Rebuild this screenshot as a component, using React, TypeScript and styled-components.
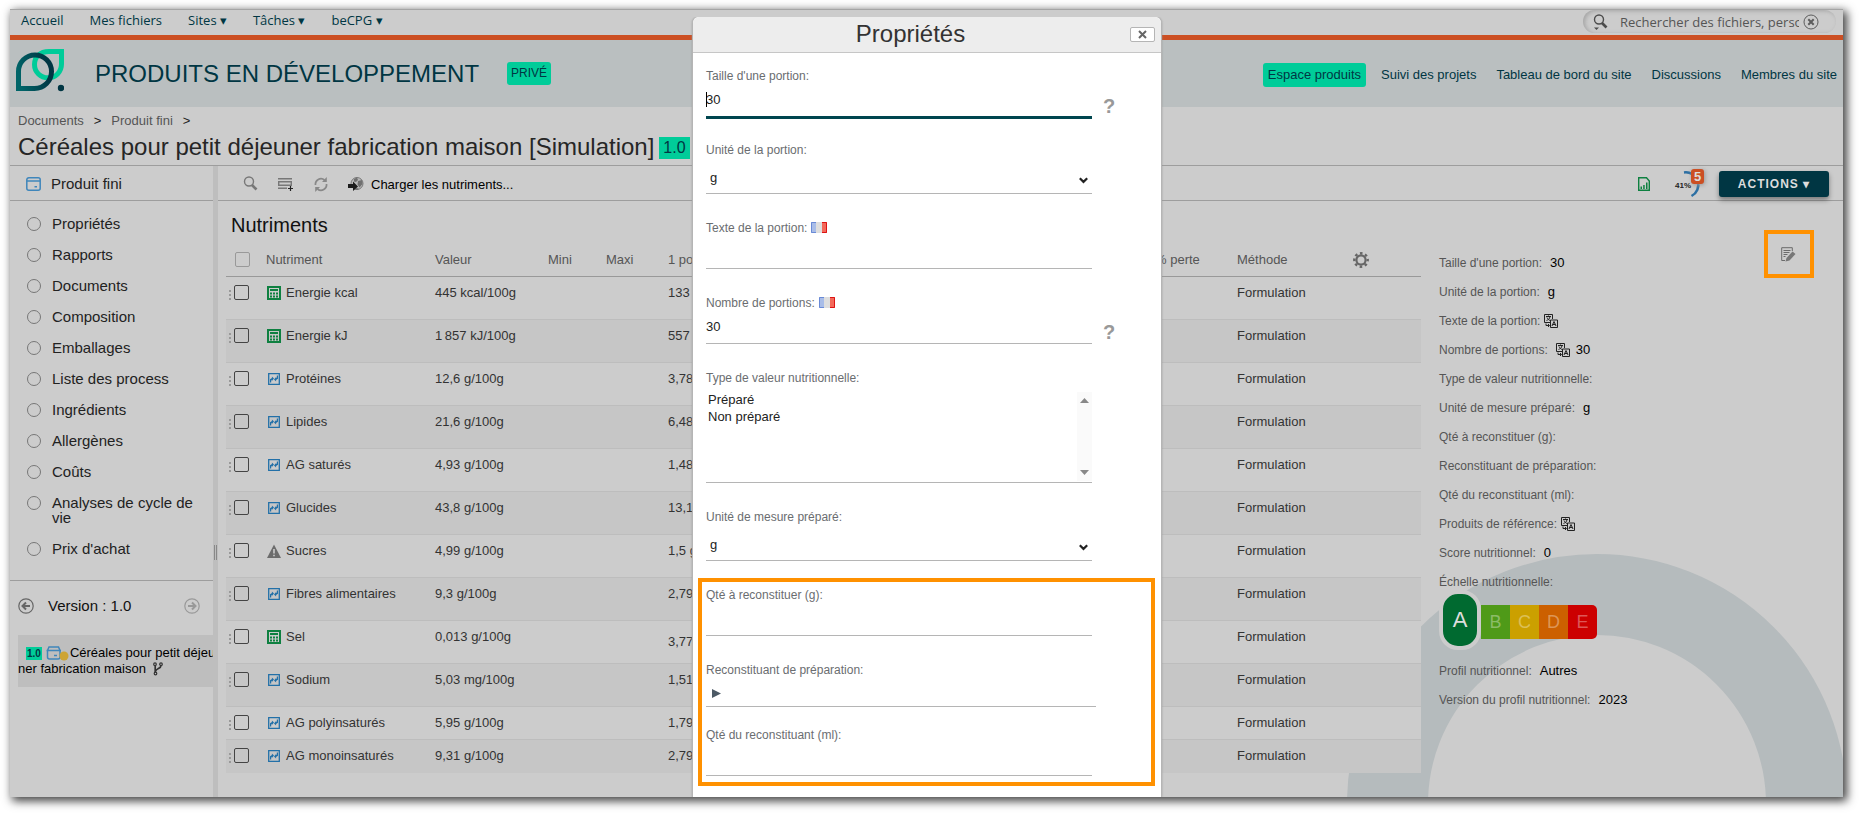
import React from 'react';
import styled, { createGlobalStyle } from 'styled-components';

const GlobalStyle = createGlobalStyle`
  *, *::before, *::after { box-sizing: border-box; }
  body {
    margin: 0;
    background: #fff;
    color: #222;
    font: 13px/16px "Liberation Sans", Arial, sans-serif;
  }
  button, input, select { font: inherit; color: inherit; }
  button { cursor: pointer; }
  a { color: inherit; text-decoration: none; }
  svg { display: block; flex: none; }
`;

/* ---------- frame ---------- */

const Frame = styled.div`
  position: relative;
  display: flex;
  flex-direction: column;
  min-height: calc(100vh - 25px);
  margin: 9px 16px 16px 10px;
  overflow: hidden;
  background: #ccc;
`;

const Shadow = styled.div`
  display: flow-root;
  &::before {
    content: "";
    position: absolute;
    inset: 9px 16px 16px 10px;
    box-shadow: 3px 3px 9px 1px rgba(0, 0, 0, 0.75);
  }
`;

/* ---------- top bar ---------- */

const TopBar = styled.header`
  display: flex;
  justify-content: space-between;
  height: 31px;
  padding: 0 7px 0 11px;
  border-top: 1px solid #a5a5a5;
  border-bottom: 5px solid #cc4f23;
`;

const TopMenu = styled.nav`
  display: flex;
  gap: 26px;
  color: #003643;
  font: 13px/20px "Open Sans", sans-serif;
`;

const SearchBox = styled.div`
  display: flex;
  align-items: center;
  width: 253px;
  height: 23px;
  padding: 0 17px 0 10px;
  border-radius: 12px;
  box-shadow: inset 2px 1px 4px #a4a4a4;
`;

const SearchInput = styled.input`
  flex: 1;
  min-width: 0;
  margin: 0 4px 0 12px;
  padding: 0;
  border: 0;
  outline: 0;
  background: none;
  font: 13px/20px "Open Sans", sans-serif;
  &::placeholder { color: #555; opacity: 1; }
`;

const BareButton = styled.button`
  display: flex;
  align-items: center;
  padding: 0;
  border: 0;
  background: none;
`;

/* ---------- site header ---------- */

const SiteHeader = styled.div`
  display: flex;
  align-items: center;
  height: 67px;
  padding: 0 6px;
  background: #babfc0;
  color: #003643;
`;

const LogoLink = styled.a`
  align-self: flex-start;
  padding-top: 9px;
`;

const SiteTitle = styled.h1`
  margin: 0 28px 0 31px;
  font-size: 24px;
  line-height: 32px;
  font-weight: 400;
  white-space: nowrap;
`;

const Tag = styled.span`
  padding: 4px;
  border-radius: 3px;
  background: #00cc99;
  font-size: 12px;
  line-height: 15px;
`;

const SiteNav = styled.nav`
  display: flex;
  align-items: center;
  gap: 20px;
  margin-left: auto;
  padding-top: 3px;
  white-space: nowrap;
`;

const SiteLink = styled.a<{ $active?: boolean }>`
  line-height: 24px;
  ${p => p.$active && `
    margin-right: -5px;
    padding: 0 5px;
    border-radius: 3px;
    background: #00cc99;
  `}
`;

/* ---------- document header ---------- */

const DocHeader = styled.div`
  padding: 6px 8px 3px;
  border-bottom: 1px solid #9d9d9d;
`;

const Crumbs = styled.nav`
  display: flex;
  gap: 10px;
  color: #555;
  i { color: #222; font-style: normal; }
`;

const DocTitle = styled.h2`
  display: flex;
  align-items: center;
  margin: 0;
  gap: 5px;
  padding-top: 3px;
  color: #262626;
  font-size: 24px;
  line-height: 30px;
  font-weight: 400;
  white-space: nowrap;
`;

const DocVersion = styled.span`
  margin-top: 2px;
  padding: 0 4px;
  background: #00cc99;
  color: #003643;
  font-size: 16px;
  line-height: 22px;
`;

/* ---------- body ---------- */

const Columns = styled.div`
  display: flex;
  flex: 1;
`;

const Sidebar = styled.aside`
  flex: none;
  width: 203px;
  overflow: hidden;
`;

const Splitter = styled.div`
  display: flex;
  justify-content: center;
  flex: none;
  width: 5px;
  background: #bebebe;
  &::before {
    content: "";
    width: 3px;
    height: 15px;
    margin-top: 379px;
    border: solid #888;
    border-width: 0 1px;
  }
`;

const SideHead = styled.div`
  display: flex;
  align-items: center;
  gap: 10px;
  height: 35px;
  padding: 1px 0 0 16px;
  border-bottom: 1px solid #9d9d9d;
  color: #222;
  font-size: 15px;
`;

const SideList = styled.ul`
  margin: 0;
  padding: 7px 12px 16px 17px;
  border-bottom: 1px solid #9d9d9d;
  list-style: none;
`;

const SideItem = styled.li`
  display: flex;
  gap: 11px;
  padding: 8px 0;
  color: #222;
  font-size: 15px;
  line-height: 15px;
  &::before {
    content: "";
    flex: none;
    width: 14px;
    height: 14px;
    margin-top: 1px;
    border: 1px solid #777;
    border-radius: 50%;
  }
`;

const VersionRow = styled.div`
  display: flex;
  align-items: center;
  padding: 17px 13px 21px 8px;
  color: #111;
  font-size: 15px;
  span { flex: 1; margin-left: 14px; }
`;

const Tree = styled.div`
  margin-left: 8px;
  padding: 10px 0;
  background: #bebebe;
  color: #000;
`;

const TreeLine = styled.div<{ $indent?: number }>`
  display: flex;
  align-items: center;
  padding-left: ${p => p.$indent || 0}px;
  white-space: nowrap;
`;

const MiniVersion = styled.span`
  margin-right: 4px;
  padding: 0 1px;
  background: #00cc99;
  color: #003643;
  font-size: 10px;
  line-height: 13px;
  font-weight: 700;
`;

/* ---------- main ---------- */

const Main = styled.main`
  position: relative;
  flex: 1;
  min-width: 0;
  overflow: hidden;
`;

const Ring = styled.div`
  position: absolute;
  right: -4px;
  bottom: -257px;
  width: 500px;
  height: 500px;
  border: 81px solid #b5bbbd;
  border-radius: 50%;
`;

const Toolbar = styled.div`
  position: relative;
  display: flex;
  align-items: center;
  height: 35px;
  padding: 2px 14px 0 25px;
  border-bottom: 1px solid #9d9d9d;
`;

const ToolIcons = styled.div`
  display: flex;
  align-items: center;
  flex: 1;
  gap: 20px;
`;

const LoadButton = styled(BareButton)`
  gap: 7px;
  color: #000;
  span { padding-top: 1px; }
`;

const GaugeBox = styled.div`
  position: relative;
  width: 30px;
  height: 30px;
  margin: 0 15px 0 23px;
`;

const Badge = styled.span`
  position: absolute;
  top: 0;
  right: 0;
  width: 13px;
  border-radius: 3px;
  background: #cc4f23;
  box-shadow: 1px 1px 4px #999;
  color: #ddd;
  font-size: 13px;
  line-height: 15px;
  font-weight: 700;
  text-align: center;
`;

const Actions = styled.button`
  height: 26px;
  padding: 0;
  width: 110px;
  border: 0;
  border-radius: 3px;
  background: #003643;
  box-shadow: 0 3px 5px rgba(0, 0, 0, 0.4);
  color: #ddd;
  font-size: 12px;
  font-weight: 700;
  letter-spacing: 1px;
`;

const Split = styled.div`
  position: relative;
  display: flex;
`;

const ListPane = styled.section`
  flex: 1;
  min-width: 0;
  padding-left: 8px;
`;

const ListTitle = styled.h3`
  margin: 0;
  padding: 12px 5px 7px;
  color: #111;
  font-size: 20px;
  line-height: 24px;
  font-weight: 400;
`;

const Table = styled.table`
  width: 100%;
  border-collapse: separate;
  border-spacing: 0;
  table-layout: fixed;
  th, td {
    padding: 0;
    text-align: left;
    font-weight: 400;
    white-space: nowrap;
    vertical-align: top;
  }
  th {
    height: 33px;
    padding-top: 8px;
    border-bottom: 1px solid #999;
    color: #555;
  }
`;

const Row = styled.tr<{ $short?: boolean }>`
  background: #ccc;
  color: #333;
  &:nth-child(even) { background: #c6c6c6; }
  td {
    height: ${p => (p.$short ? 33 : 43)}px;
    padding-top: 8px;
    border-bottom: 1px solid #bdbdbd;
  }
  &:last-child td { border-bottom-color: transparent; }
`;

const Pick = styled.span`
  display: flex;
  gap: 3px;
  padding-left: 3px;
`;

const Check = styled.input<{ $soft?: boolean }>`
  appearance: none;
  width: 15px;
  height: 15px;
  margin: ${p => (p.$soft ? '0 0 0 9px' : '0')};
  border: 1px solid ${p => (p.$soft ? '#999' : '#444')};
  border-radius: 2px;
`;

const NutrientName = styled.span`
  display: flex;
  align-items: center;
  gap: 5px;
  padding-left: 1px;
`;

/* ---------- detail pane ---------- */

const Detail = styled.section`
  display: flex;
  justify-content: space-between;
  flex: none;
  width: 422px;
  padding: 29px 29px 0 18px;
`;

const Facts = styled.dl`
  margin: 0;
  padding-top: 18px;
`;

const Fact = styled.div`
  display: flex;
  align-items: center;
  height: 29px;
  color: #555;
  font-size: 12px;
  dt { padding-top: 1px; }
  dd {
    display: flex;
    align-items: center;
    gap: 6px;
    margin: 0 0 0 8px;
    color: #000;
    font-size: 13px;
  }
`;

const IconFact = styled(Fact)`
  dd { margin-left: 4px; }
`;

const Score = styled.dd`
  display: flex;
  align-items: center;
  height: 60px;
  margin: -6px 0 6px;
`;

const Grade = styled.span<{ $bg: string; $big?: boolean; $last?: boolean }>`
  background: ${p => p.$bg};
  text-align: center;
  ${p => p.$big
    ? `width: 42px; border: 4px solid #ccc; border-radius: 19px;
       color: #ddd; font-size: 22px; line-height: 52px;`
    : `width: 29px; margin-top: 3px; color: rgba(255, 255, 255, 0.35);
       font-size: 18px; line-height: 34px;`}
  ${p => p.$last && 'border-radius: 0 5px 5px 0;'}
`;

const EditMark = styled(BareButton)`
  justify-content: center;
  width: 50px;
  height: 48px;
  padding-right: 2px;
  border: 4px solid #ff9100;
`;

/* ---------- dialog ---------- */

const DialogLayer = styled.div`
  position: absolute;
  inset: 8px 0 0 1px;
  display: flex;
  justify-content: center;
  overflow: hidden;
`;

const Dialog = styled.section`
  width: 470px;
  border: solid #b5b5b5;
  border-width: 0 1px;
  border-radius: 6px 6px 0 0;
  background: #fff;
  box-shadow: 0 0 2px #999;
  color: #222;
`;

const DialogHead = styled.div`
  display: flex;
  align-items: center;
  height: 36px;
  padding: 0 6px 0 0;
  border-bottom: 1px solid #c6c6c6;
  border-radius: 6px 6px 0 0;
  background: #ededed;
  h2 {
    flex: 1;
    margin: 0;
    padding: 0 2px 2px 0;
    font-size: 24px;
    line-height: 30px;
    font-weight: 400;
    text-align: center;
    color: #333;
  }
`;

const CloseButton = styled.button`
  display: flex;
  align-items: center;
  justify-content: center;
  width: 25px;
  height: 15px;
  padding: 0;
  border: 1px solid #b5b5b5;
  border-radius: 2px;
  background: #fff;
`;

const Form = styled.form`
  display: flex;
  flex-direction: column;
  gap: 26px;
  padding: 15px 6px 12px 13px;
`;

const Field = styled.div`
  position: relative;
`;

const Label = styled.label`
  display: flex;
  align-items: center;
  gap: 4px;
  color: #6a6d70;
  font-size: 12px;
  line-height: 16px;
  svg { margin-bottom: 2px; }
`;

const Line = styled.div<{ $focus?: boolean }>`
  position: relative;
  display: flex;
  align-items: center;
  gap: 11px;
  margin-bottom: ${p => (p.$focus ? -3 : 0)}px;
`;

const TextInput = styled.input<{ $focus?: boolean }>`
  width: 386px;
  height: ${p => (p.$focus ? 35 : 33)}px;
  padding: 0 0 2px;
  border: 0;
  border-bottom: ${p => (p.$focus ? '3px solid #00464f' : '1px solid #b5b5b5')};
  border-radius: 0;
  outline: 0;
  background: none;
`;

const Caret = styled.span`
  position: absolute;
  top: 8px;
  left: 0;
  width: 1px;
  height: 15px;
  background: #000;
`;

const Help = styled.button`
  padding: 9px 0 0;
  border: 0;
  background: none;
  color: #999;
  font-size: 20px;
  line-height: 20px;
  font-weight: 700;
`;

const Select = styled.select`
  appearance: none;
  width: 386px;
  height: 36px;
  padding: 5px 4px 0;
  border: 0;
  border-bottom: 1px solid #b5b5b5;
  border-radius: 0;
  background: none;
`;

const Chevron = styled.svg`
  position: absolute;
  left: 373px;
  top: 19px;
  pointer-events: none;
`;

const MultiSelect = styled.select`
  appearance: none;
  display: block;
  width: 386px;
  height: 97px;
  padding: 6px 0 0;
  border: 0;
  border-bottom: 1px solid #b5b5b5;
  border-radius: 0;
  outline: 0;
  background: none;
  overflow: hidden;
  option { min-height: 17px; padding: 0 2px; line-height: 17px; }
`;

const Scrollbar = styled.div`
  position: absolute;
  top: 22px;
  left: 371px;
  display: flex;
  flex-direction: column;
  align-items: center;
  justify-content: space-between;
  width: 15px;
  height: 89px;
  padding: 6px 0;
  background: #fafafa;
`;

const PickerLine = styled.div`
  display: flex;
  align-items: center;
  width: 390px;
  height: 29px;
  padding: 2px 0 0 6px;
  border-bottom: 1px solid #b5b5b5;
`;

const Highlight = styled.div`
  display: flex;
  flex-direction: column;
  margin: -9px 0 0 -8px;
  padding: 5px 4px 6px;
  border: 4px solid #ff9100;
  ${Field} + ${Field} { margin-top: 26px; }
  ${Field}:last-child { margin-top: 20px; }
`;

/* ---------- icons ---------- */

const Logo = () => (
  <svg width="48" height="43" viewBox="0 0 48 43" fill="none">
    <defs>
      <linearGradient id="leaf" x1="0" y1="0.6" x2="0.9" y2="0.4">
        <stop offset="0" stopColor="#006468" />
        <stop offset="1" stopColor="#003643" />
      </linearGradient>
    </defs>
    <path d="M45.500 2.500V15C45.500 23 39.500 28.800 32 28.800S18.500 23 18.500 15.500 24 2.500 33 2.500z" stroke="#00cc99" strokeWidth="5" />
    <path d="M2.500 39.500V22.500A16.500 16.500 0 0 1 35.500 22.500C35.500 32 28 39.500 18.500 39.500z" stroke="url(#leaf)" strokeWidth="5" />
    <circle cx="45" cy="39" r="3.200" fill="#003643" />
  </svg>
);

const Magnifier = ({ color = '#777', arrow = false }) => (
  <svg width="15" height="16" viewBox="0 0 15 16" fill="none" stroke={color}>
    <circle cx="6" cy="5.500" r="4.500" strokeWidth="1.400" />
    <path d="M9 9l4.500 4.500" strokeWidth="2.600" />
    {arrow && <path d="M1 13.500h5l-2.500 2.500z" fill={color} stroke="none" />}
  </svg>
);

const ClearIcon = () => (
  <svg width="16" height="16" viewBox="0 0 16 16" fill="none" stroke="#5c5c5c">
    <circle cx="8" cy="8" r="7" strokeWidth="1" />
    <path d="M5.300 5.300l5.400 5.400M10.700 5.300l-5.400 5.400" strokeWidth="2" />
  </svg>
);

const BoxIcon = () => (
  <svg width="15" height="14" viewBox="0 0 15 14" fill="none" stroke="#3f86bb" strokeWidth="1.500">
    <path d="M.800 4.500V2.800a2 2 0 0 1 2-2h9.400a2 2 0 0 1 2 2V11.200a2 2 0 0 1-2 2H2.800a2 2 0 0 1-2-2zM.800 4h13.400M8.500 9.700H11" />
  </svg>
);

const AddRowIcon = () => (
  <svg width="16" height="16" viewBox="0 0 16 16" fill="none">
    <path d="M0 2.700h14M.700 5.700h12.600v3.600H.700zM0 12.300h9" stroke="#777" strokeWidth="1.400" />
    <path d="M12.500 10v5M10 12.500h5" stroke="#222" strokeWidth="1.200" />
  </svg>
);

const RefreshIcon = () => (
  <svg width="14" height="15" viewBox="0 0 14 15" fill="none" stroke="#888" strokeWidth="1.700">
    <path d="M1.500 8A5.500 5.500 0 0 1 10.500 3M12.500 7A5.500 5.500 0 0 1 3.500 12" />
    <path d="M12.800 0v5H8zM1.200 15v-5H6z" fill="#888" stroke="none" />
  </svg>
);

const ImportIcon = () => (
  <svg width="16" height="16" viewBox="0 0 16 16" fill="none">
    <circle cx="9" cy="7.500" r="6" fill="#b8b8b8" stroke="#777" strokeWidth="1" />
    <path d="M6 3l3-1.500 1 2.500-2 2-2-.500zM10 5l4-1 .500 4-3 3.500-2-3zM6 13l3-1 2 1-2 1z" fill="#707070" />
    <path d="M0 8h5V5.500l5 5L5 15v-3H0z" fill="#1c1c1c" />
  </svg>
);

const ReportIcon = () => (
  <svg width="13" height="14" viewBox="0 0 13 14" fill="none">
    <path d="M.700.700H8.500L11.300 4v9.300H.700z" stroke="#0e8040" strokeWidth="1.400" />
    <path d="M2.500 9.500H4V12H2.500zM5.200 8h1.500v4H5.200zM8 5.500h1.500V12H8z" fill="#0e8040" />
  </svg>
);

const Gauge = () => (
  <svg width="30" height="30" viewBox="0 0 30 30" fill="none">
    <path d="M10 3.500A12.500 12.500 0 0 1 17.500 27" stroke="#2c6fa3" strokeWidth="2.500" />
    <text x="1" y="19" fontSize="8" fontWeight="700" fill="#222" fontFamily="Liberation Sans">41%</text>
  </svg>
);

const BackIcon = ({ color, flip = false }: { color: string; flip?: boolean }) => (
  <svg width="16" height="16" viewBox="0 0 16 16" fill="none" stroke={color}>
    <circle cx="8" cy="8" r="7.200" strokeWidth="1.200" />
    <path d={flip ? 'M4 8h7M8 4.500L11.500 8 8 11.500' : 'M12 8H5M8 4.500L4.500 8 8 11.500'} strokeWidth="2" />
  </svg>
);

const BranchIcon = () => (
  <svg width="10" height="14" viewBox="0 0 10 14" fill="none" stroke="#333" strokeWidth="1.200">
    <circle cx="2" cy="2.200" r="1.300" />
    <circle cx="8" cy="2.200" r="1.300" />
    <circle cx="2.500" cy="11.500" r="1.300" />
    <path d="M2.200 3.500v6.700M8 3.500C8 7 3 6 2.500 9.500" strokeWidth="1.700" />
  </svg>
);

const GearIcon = () => (
  <svg width="16" height="16" viewBox="0 0 16 16" fill="none" stroke="#666">
    <circle cx="8" cy="8" r="4.600" strokeWidth="2.200" />
    <circle cx="8" cy="8" r="6.700" strokeWidth="2.400" strokeDasharray="2.600 2.662" strokeDashoffset="1.300" />
  </svg>
);

const CalcIcon = () => (
  <svg width="14" height="14" viewBox="0 0 14 14" fill="none">
    <path d="M1 1h12v12H1z" stroke="#0e8040" strokeWidth="2" />
    <path d="M3 4h8" stroke="#0e8040" strokeWidth="2" />
    <path d="M3 7.500h8M3 10.500h8" stroke="#0e8040" strokeWidth="2" strokeDasharray="2 1" />
  </svg>
);

const SheetIcon = () => (
  <svg width="14" height="14" viewBox="0 0 14 14" fill="#2270a8">
    <path d="M1.700 1.700h10.600v10.600H1.700z" fill="none" stroke="#2270a8" strokeWidth="1.300" />
    <path d="M3 10.500V7.200L4.900 6V4.600L7 6.400 4.900 9V7.900L4.200 8.400v2.100z" />
    <path d="M3 10.500V7.200L4.900 6V4.600L7 6.400 4.900 9V7.900L4.200 8.400v2.100z" transform="rotate(180 7 7)" />
  </svg>
);

const WarnIcon = () => (
  <svg width="14" height="14" viewBox="0 0 14 14">
    <path d="M7 .500L14 14H0z" fill="#6c6c6c" />
    <path d="M6.200 5h1.600v4.500H6.200zM6.200 10.700h1.600v1.600H6.200z" fill="#ccc" />
  </svg>
);

const DragDots = () => (
  <svg width="2" height="15" viewBox="0 0 2 15" fill="#999">
    <path d="M0 5h2v2H0zM0 9h2v2H0zM0 13h2v2H0z" />
  </svg>
);

const TranslateIcon = () => (
  <svg width="14" height="14" viewBox="0 0 14 14" fill="none" stroke="#222">
    <path d="M6 8.500H.500v-8h8V5" />
    <path d="M2 2.500h5M4.500 1.500v1M6 2.500C6 5 3.500 6 2.500 6.500M3 3.500c.500 1.500 2 2.500 3 3M2 9.500v2h3M4 10l1.500 1.500L4 13" />
    <path d="M6.500 6h7v7.500h-7z" />
    <path d="M8 12l2-4.500L12 12M8.700 10.500h2.600" />
  </svg>
);

const EditIcon = () => (
  <svg width="15" height="15" viewBox="0 0 15 15" fill="none" stroke="#6b6b6b">
    <path d="M4 13.500H.700V.700h10.600V4M2.500 3.500h7M2.500 5.500h6M2.500 7.500h4M2.500 9.500h2" />
    <path d="M4.500 14.500l1-3.500 6-6.500 3 2.500-6 6.500z" fill="#777" stroke="none" />
  </svg>
);

const CloseIcon = () => (
  <svg width="9" height="9" viewBox="0 0 9 9" stroke="#666" strokeWidth="2">
    <path d="M1 1l7 7M8 1L1 8" />
  </svg>
);

const Flag = () => (
  <svg width="16" height="11" viewBox="0 0 16 11">
    <path d="M0 0h5v11H0z" fill="#a9bde8" />
    <path d="M5 0h6v11H5z" fill="#dedede" />
    <path d="M11 0h5v11h-5z" fill="#f3695a" />
    <path d="M5 .500H.500v10H5" fill="none" stroke="#6a8ad6" />
    <path d="M11 .500h4.500v10H11" fill="none" stroke="#dc1414" />
  </svg>
);

const Triangle = ({ d }: { d: string }) => (
  <svg width="9" height="5" viewBox="0 0 9 5"><path d={d} fill="#888" /></svg>
);

const SelectArrow = () => (
  <Chevron width="9" height="7" viewBox="0 0 9 7" fill="none" stroke="#222" strokeWidth="2.200">
    <path d="M.800 1.200l3.700 3.700 3.700-3.700" />
  </Chevron>
);

/* ---------- data ---------- */

const sections = [
  'Propriétés', 'Rapports', 'Documents', 'Composition', 'Emballages', 'Liste des process',
  'Ingrédients', 'Allergènes', 'Coûts', 'Analyses de cycle de vie', "Prix d'achat",
];

type Nutrient = { icon: React.ReactNode; name: string; value: string; portion: React.ReactNode };

const calc = <CalcIcon />;
const sheet = <SheetIcon />;

const nutrients: Nutrient[] = [
  { icon: calc, name: 'Energie kcal', value: '445 kcal/100g', portion: '133 kcal' },
  { icon: calc, name: 'Energie kJ', value: '1\u202f857 kJ/100g', portion: '557 kJ' },
  { icon: sheet, name: 'Protéines', value: '12,6 g/100g', portion: '3,78 g' },
  { icon: sheet, name: 'Lipides', value: '21,6 g/100g', portion: '6,48 g' },
  { icon: sheet, name: 'AG saturés', value: '4,93 g/100g', portion: '1,48 g' },
  { icon: sheet, name: 'Glucides', value: '43,8 g/100g', portion: '13,1 g' },
  { icon: <WarnIcon />, name: 'Sucres', value: '4,99 g/100g', portion: '1,5 g' },
  { icon: sheet, name: 'Fibres alimentaires', value: '9,3 g/100g', portion: '2,79 g' },
  { icon: calc, name: 'Sel', value: '0,013 g/100g', portion: <>3,77×10<sup>-3</sup> g</> },
  { icon: sheet, name: 'Sodium', value: '5,03 mg/100g', portion: '1,51 mg' },
  { icon: sheet, name: 'AG polyinsaturés', value: '5,95 g/100g', portion: '1,79 g' },
  { icon: sheet, name: 'AG monoinsaturés', value: '9,31 g/100g', portion: '2,79 g' },
];

const columnWidths = [40, 169, 113, 58, 62, undefined, 82, 116, 68];

/* ---------- page ---------- */

export default function App() {
  return (
    <>
      <GlobalStyle />
      <Shadow>
        <Frame>
          <TopBar>
            <TopMenu>
              <a href="#accueil">Accueil</a>
              <a href="#fichiers">Mes fichiers</a>
              <a href="#sites">Sites ▾</a>
              <a href="#taches">Tâches ▾</a>
              <a href="#becpg">beCPG ▾</a>
            </TopMenu>
            <SearchBox>
              <Magnifier color="#4c4c4c" arrow />
              <SearchInput aria-label="Rechercher" placeholder="Rechercher des fichiers, personnes" />
              <BareButton aria-label="Effacer"><ClearIcon /></BareButton>
            </SearchBox>
          </TopBar>

          <SiteHeader>
            <LogoLink href="#accueil" aria-label="Accueil"><Logo /></LogoLink>
            <SiteTitle>PRODUITS EN DÉVELOPPEMENT</SiteTitle>
            <Tag>PRIVÉ</Tag>
            <SiteNav>
              <SiteLink href="#espace" $active>Espace produits</SiteLink>
              <SiteLink href="#suivi">Suivi des projets</SiteLink>
              <SiteLink href="#tableau">Tableau de bord du site</SiteLink>
              <SiteLink href="#discussions">Discussions</SiteLink>
              <SiteLink href="#membres">Membres du site</SiteLink>
            </SiteNav>
          </SiteHeader>

          <DocHeader>
            <Crumbs>
              <a href="#documents">Documents</a><i>&gt;</i>
              <a href="#produit-fini">Produit fini</a><i>&gt;</i>
            </Crumbs>
            <DocTitle>
              Céréales pour petit déjeuner fabrication maison [Simulation]
              <DocVersion>1.0</DocVersion>
            </DocTitle>
          </DocHeader>

          <Columns>
            <Sidebar>
              <SideHead><BoxIcon />Produit fini</SideHead>
              <SideList>
                {sections.map(s => <SideItem key={s}><a href="#section">{s}</a></SideItem>)}
              </SideList>
              <VersionRow>
                <BareButton aria-label="Version précédente"><BackIcon color="#666" /></BareButton>
                <span>Version : 1.0</span>
                <BareButton aria-label="Version suivante"><BackIcon color="#999" flip /></BareButton>
              </VersionRow>
              <Tree>
                <TreeLine $indent={8}>
                  <MiniVersion>1.0</MiniVersion>
                  <svg width="24" height="16" viewBox="0 0 24 16" fill="none">
                    <path d="M1.500 5.500L3 2h9.500L14 5.500V12a2 2 0 0 1-2 2H3.500a2 2 0 0 1-2-2zM.500 5.500H15M8 10.500h3" stroke="#3f86bb" strokeWidth="1.500" />
                    <circle cx="18" cy="11" r="4.500" fill="#cda434" />
                  </svg>
                  Céréales pour petit déjeu
                </TreeLine>
                <TreeLine>ner fabrication maison&nbsp;&nbsp;<BranchIcon /></TreeLine>
              </Tree>
            </Sidebar>

            <Splitter />

            <Main>
              <Ring />
              <Toolbar>
                <ToolIcons>
                  <BareButton aria-label="Filtrer"><Magnifier /></BareButton>
                  <BareButton aria-label="Ajouter"><AddRowIcon /></BareButton>
                  <BareButton aria-label="Actualiser"><RefreshIcon /></BareButton>
                  <LoadButton><ImportIcon /><span>Charger les nutriments...</span></LoadButton>
                </ToolIcons>
                <BareButton aria-label="Rapport"><ReportIcon /></BareButton>
                <GaugeBox><Gauge /><Badge>5</Badge></GaugeBox>
                <Actions>ACTIONS ▾</Actions>
              </Toolbar>

              <Split>
                <ListPane>
                  <ListTitle>Nutriments</ListTitle>
                  <Table>
                    <colgroup>
                      {columnWidths.map((w, i) => <col key={i} width={w} />)}
                    </colgroup>
                    <thead>
                      <tr>
                        <th><Check type="checkbox" $soft aria-label="Tout sélectionner" /></th>
                        <th>Nutriment</th>
                        <th>Valeur</th>
                        <th>Mini</th>
                        <th>Maxi</th>
                        <th>1 portion</th>
                        <th>% perte</th>
                        <th>Méthode</th>
                        <th><BareButton aria-label="Configurer"><GearIcon /></BareButton></th>
                      </tr>
                    </thead>
                    <tbody>
                      {nutrients.map((n, i) => (
                        <Row key={n.name} $short={i > 9}>
                          <td>
                            <Pick><DragDots /><Check type="checkbox" aria-label={n.name} /></Pick>
                          </td>
                          <td><NutrientName>{n.icon}{n.name}</NutrientName></td>
                          <td>{n.value}</td>
                          <td />
                          <td />
                          <td>{n.portion}</td>
                          <td />
                          <td>Formulation</td>
                          <td />
                        </Row>
                      ))}
                    </tbody>
                  </Table>
                </ListPane>

                <Detail>
                  <Facts>
                    <Fact><dt>Taille d'une portion:</dt><dd>30</dd></Fact>
                    <Fact><dt>Unité de la portion:</dt><dd>g</dd></Fact>
                    <IconFact><dt>Texte de la portion:</dt><dd><TranslateIcon /></dd></IconFact>
                    <Fact><dt>Nombre de portions:</dt><dd><TranslateIcon />30</dd></Fact>
                    <Fact><dt>Type de valeur nutritionnelle:</dt></Fact>
                    <Fact><dt>Unité de mesure préparé:</dt><dd>g</dd></Fact>
                    <Fact><dt>Qté à reconstituer (g):</dt></Fact>
                    <Fact><dt>Reconstituant de préparation:</dt></Fact>
                    <Fact><dt>Qté du reconstituant (ml):</dt></Fact>
                    <IconFact><dt>Produits de référence:</dt><dd><TranslateIcon /></dd></IconFact>
                    <Fact><dt>Score nutritionnel:</dt><dd>0</dd></Fact>
                    <Fact><dt>Échelle nutritionnelle:</dt></Fact>
                    <Score>
                      <Grade $bg="#006a30" $big>A</Grade>
                      <Grade $bg="#4f9a18">B</Grade>
                      <Grade $bg="#cba000">C</Grade>
                      <Grade $bg="#cc6000">D</Grade>
                      <Grade $bg="#cc0000" $last>E</Grade>
                    </Score>
                    <Fact><dt>Profil nutritionnel:</dt><dd>Autres</dd></Fact>
                    <Fact><dt>Version du profil nutritionnel:</dt><dd>2023</dd></Fact>
                  </Facts>
                  <EditMark aria-label="Modifier"><EditIcon /></EditMark>
                </Detail>
              </Split>
            </Main>
          </Columns>

          <DialogLayer>
            <Dialog role="dialog" aria-labelledby="dialog-title">
              <DialogHead>
                <h2 id="dialog-title">Propriétés</h2>
                <CloseButton aria-label="Fermer"><CloseIcon /></CloseButton>
              </DialogHead>
              <Form>
                <Field>
                  <Label htmlFor="size">Taille d'une portion:</Label>
                  <Line $focus>
                    <TextInput id="size" defaultValue="30" $focus />
                    <Caret />
                    <Help type="button">?</Help>
                  </Line>
                </Field>
                <Field>
                  <Label htmlFor="unit">Unité de la portion:</Label>
                  <Line><Select id="unit"><option>g</option></Select><SelectArrow /></Line>
                </Field>
                <Field>
                  <Label htmlFor="text">Texte de la portion: <Flag /></Label>
                  <Line><TextInput id="text" /></Line>
                </Field>
                <Field>
                  <Label htmlFor="count">Nombre de portions: <Flag /></Label>
                  <Line>
                    <TextInput id="count" defaultValue="30" />
                    <Help type="button">?</Help>
                  </Line>
                </Field>
                <Field>
                  <Label htmlFor="kind">Type de valeur nutritionnelle:</Label>
                  <MultiSelect id="kind" multiple>
                    <option>Préparé</option>
                    <option>Non préparé</option>
                  </MultiSelect>
                  <Scrollbar>
                    <Triangle d="M0 5L4.500 0 9 5z" />
                    <Triangle d="M0 0h9L4.500 5z" />
                  </Scrollbar>
                </Field>
                <Field>
                  <Label htmlFor="prepared">Unité de mesure préparé:</Label>
                  <Line><Select id="prepared"><option>g</option></Select><SelectArrow /></Line>
                </Field>
                <Highlight>
                  <Field>
                    <Label htmlFor="qty">Qté à reconstituer (g):</Label>
                    <Line><TextInput id="qty" /></Line>
                  </Field>
                  <Field>
                    <Label as="span">Reconstituant de préparation:</Label>
                    <PickerLine>
                      <BareButton type="button" aria-label="Choisir">
                        <svg width="9" height="9" viewBox="0 0 9 9"><path d="M0 0l9 4.500L0 9z" fill="#4d5a66" /></svg>
                      </BareButton>
                    </PickerLine>
                  </Field>
                  <Field>
                    <Label htmlFor="qty-mix">Qté du reconstituant (ml):</Label>
                    <Line><TextInput id="qty-mix" /></Line>
                  </Field>
                </Highlight>
              </Form>
            </Dialog>
          </DialogLayer>
        </Frame>
      </Shadow>
    </>
  );
}
